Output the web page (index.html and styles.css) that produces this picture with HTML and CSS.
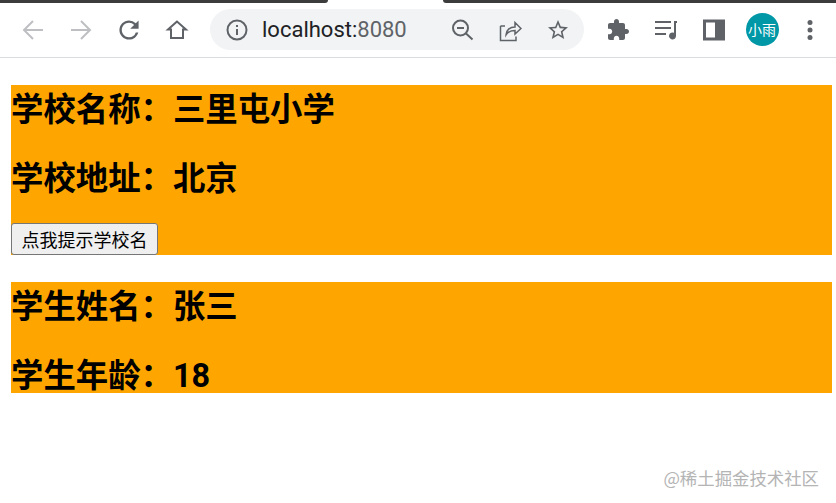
FILE: index.html
```html
<!DOCTYPE html>
<html lang="zh-CN">
<head>
    <meta charset="UTF-8">
    <title>localhost:8080</title>
    <link rel="stylesheet" href="styles.css">
</head>
<body>
    <header class="browser">
        <div class="tabstrip">
            <div class="tab-left"></div>
            <div class="tab-right"></div>
        </div>
        <div class="toolbar">
            <span class="slot"><svg viewBox="0 0 24 24" class="line faded"><path d="M22 12H3M12 3l-9 9 9 9"/></svg></span>
            <span class="slot"><svg viewBox="0 0 24 24" class="line faded"><path d="M2 12h19M12 3l9 9-9 9"/></svg></span>
            <span class="slot"><svg viewBox="2 2 20 20" class="solid"><path d="M17.65 6.35A7.958 7.958 0 0 0 12 4c-4.42 0-7.99 3.58-7.99 8s3.57 8 7.99 8c3.73 0 6.84-2.55 7.73-6h-2.08A5.99 5.99 0 0 1 12 18c-3.31 0-6-2.69-6-6s2.69-6 6-6c1.66 0 3.14.69 4.22 1.78L13 11h7V4l-2.35 2.35z"/></svg></span>
            <span class="slot"><svg viewBox="0 0 24 24" class="line"><path d="M12 3.500 3 11.500h3V20h12v-8.500h3z"/></svg></span>

            <div class="omnibox">
                <svg viewBox="0 0 24 24" class="info">
                    <circle cx="12" cy="12" r="9.500" class="ring"/>
                    <path d="M11 11h2v6h-2zM11 7h2v2h-2z"/>
                </svg>
                <span class="url">localhost:<span class="port">8080</span></span>
                <span class="omni-icons">
                    <span class="slot"><svg viewBox="0 0 24 24" class="line"><circle cx="10.500" cy="10" r="7.500"/><path d="M16 15.500l6.500 6M7 10h7"/></svg></span>
                    <span class="slot"><svg viewBox="0 0 24 24" class="line thin"><path d="M2.500 8v14.500H18v-4M2.500 8H7M8 17c0-5 4-8 9-8V4.500l6 6-6 5.500v-3.500c-4 0-7 1-9 4.500z"/></svg></span>
                    <span class="slot"><svg viewBox="0 0 24 24" class="solid"><path d="M22 9.240l-7.190-.62L12 2 9.190 8.630 2 9.240l5.460 4.730L5.820 21 12 17.270 18.180 21l-1.630-7.030L22 9.240zM12 15.400l-3.760 2.270 1-4.280-3.320-2.880 4.380-.38L12 6.100l1.710 4.040 4.380.38-3.320 2.880 1 4.280L12 15.400z"/></svg></span>
                </span>
            </div>

            <span class="slot"><svg viewBox="0 0 24 24" class="solid"><path d="M20.500 11H19V7c0-1.100-.9-2-2-2h-4V3.500C13 2.120 11.880 1 10.500 1S8 2.120 8 3.500V5H4c-1.100 0-1.990.9-1.990 2v3.800H3.500c1.490 0 2.700 1.210 2.700 2.700s-1.210 2.700-2.700 2.700H2V20c0 1.100.9 2 2 2h3.800v-1.500c0-1.490 1.210-2.700 2.700-2.700 1.490 0 2.700 1.210 2.700 2.700V22H17c1.100 0 2-.9 2-2v-4h1.500c1.380 0 2.500-1.120 2.500-2.500S21.880 11 20.500 11z"/></svg></span>
            <span class="slot"><svg viewBox="0 0 24 24" class="solid"><path d="M1 3h16v2H1zM1 9h16v2H1zM1 15h11v2H1zM20 3h3v2h-1v13a3.500 3.500 0 1 1-2-3.200z"/></svg></span>
            <span class="slot"><svg viewBox="0 0 24 24" class="solid"><path d="M1 1.500h22v21H1zM4 4.500v15h9v-15z" fill-rule="evenodd"/></svg></span>
            <span class="slot"><span class="avatar">小雨</span></span>
            <span class="slot"><svg viewBox="0 0 24 24" class="solid"><circle cx="12" cy="4.500" r="2.500"/><circle cx="12" cy="12" r="2.500"/><circle cx="12" cy="19.500" r="2.500"/></svg></span>
        </div>
    </header>

    <main class="page">
        <div class="box">
            <h2>学校名称：三里屯小学</h2>
            <h2>学校地址：北京</h2>
            <button>点我提示学校名</button>
        </div>
        <div class="box">
            <h2>学生姓名：张三</h2>
            <h2>学生年龄：18</h2>
        </div>
    </main>

    <div class="watermark">@稀土掘金技术社区</div>
</body>
</html>
```

FILE: styles.css
```css
html, body {
    height: 100%;
}
body {
    font-family: "Noto Sans CJK SC", "Noto Sans", sans-serif;
    margin: 0;
    overflow: hidden;
    background: #fff;
}

/* browser chrome */
.browser {
    border-bottom: 1px solid #dadce0;
}
.tabstrip {
    display: flex;
    justify-content: space-between;
    height: 3px;
}
.tab-left, .tab-right {
    background: #3c3c3c;
}
.tab-left {
    width: 328px;
    border-bottom-right-radius: 4px;
}
.tab-right {
    width: 393px;
    border-bottom-left-radius: 4px;
}
.toolbar {
    display: flex;
    align-items: center;
    height: 54px;
    padding: 0 2px 1px 9px;
    box-sizing: border-box;
}
.slot {
    display: flex;
    align-items: center;
    justify-content: center;
    width: 48px;
    flex: none;
}
.slot svg {
    width: 24px;
    height: 24px;
}
.line {
    fill: none;
    stroke: #5f6368;
    stroke-width: 2;
}
.line.faded {
    stroke: #bdbfc2;
}
.line.thin {
    stroke-width: 1.5;
}
.solid {
    fill: #5f6368;
}

/* address bar */
.omnibox {
    display: flex;
    align-items: center;
    width: 374px;
    height: 41px;
    margin: 0 10px 0 9px;
    padding-left: 15px;
    box-sizing: border-box;
    background: #f1f3f4;
    border-radius: 21px;
    flex: none;
}
.info {
    width: 24px;
    height: 24px;
    fill: #5f6368;
    flex: none;
}
.info .ring {
    fill: none;
    stroke: #5f6368;
    stroke-width: 2;
}
.url {
    margin-left: 13px;
    font-family: Roboto, sans-serif;
    font-size: 22px;
    color: #202124;
    white-space: nowrap;
}
.port {
    color: #5f6368;
}
.omni-icons {
    display: flex;
    margin-left: auto;
    margin-right: 2px;
}
.avatar {
    width: 33px;
    height: 33px;
    border-radius: 50%;
    background: #0097a7;
    color: #fff;
    font-size: 14px;
    line-height: 33px;
    text-align: center;
}

/* page content */
.page {
    padding: 27px 4px 0 11px;
}
.box {
    background: orange;
    margin-bottom: 26.6px;
}
h2 {
    font-family: Roboto, "Noto Sans CJK SC", sans-serif;
    font-size: 32.4px;
    font-weight: 700;
    line-height: 34px;
    padding-top: 8px;
    margin: 0 0 27.2px;
    color: #000;
}
.box h2:last-child {
    margin-bottom: 0;
}
button {
    display: block;
    width: 147px;
    height: 32px;
    padding: 0;
    font-family: "Noto Sans CJK SC", sans-serif;
    font-size: 18px;
    line-height: 28px;
    color: #000;
    background: #efefef;
    border: 1px solid #767676;
    border-radius: 3px;
}

.watermark {
    position: absolute;
    top: 465px;
    right: 17px;
    font-size: 17.4px;
    line-height: 26px;
    color: #b4b4b4;
    white-space: nowrap;
}
```
